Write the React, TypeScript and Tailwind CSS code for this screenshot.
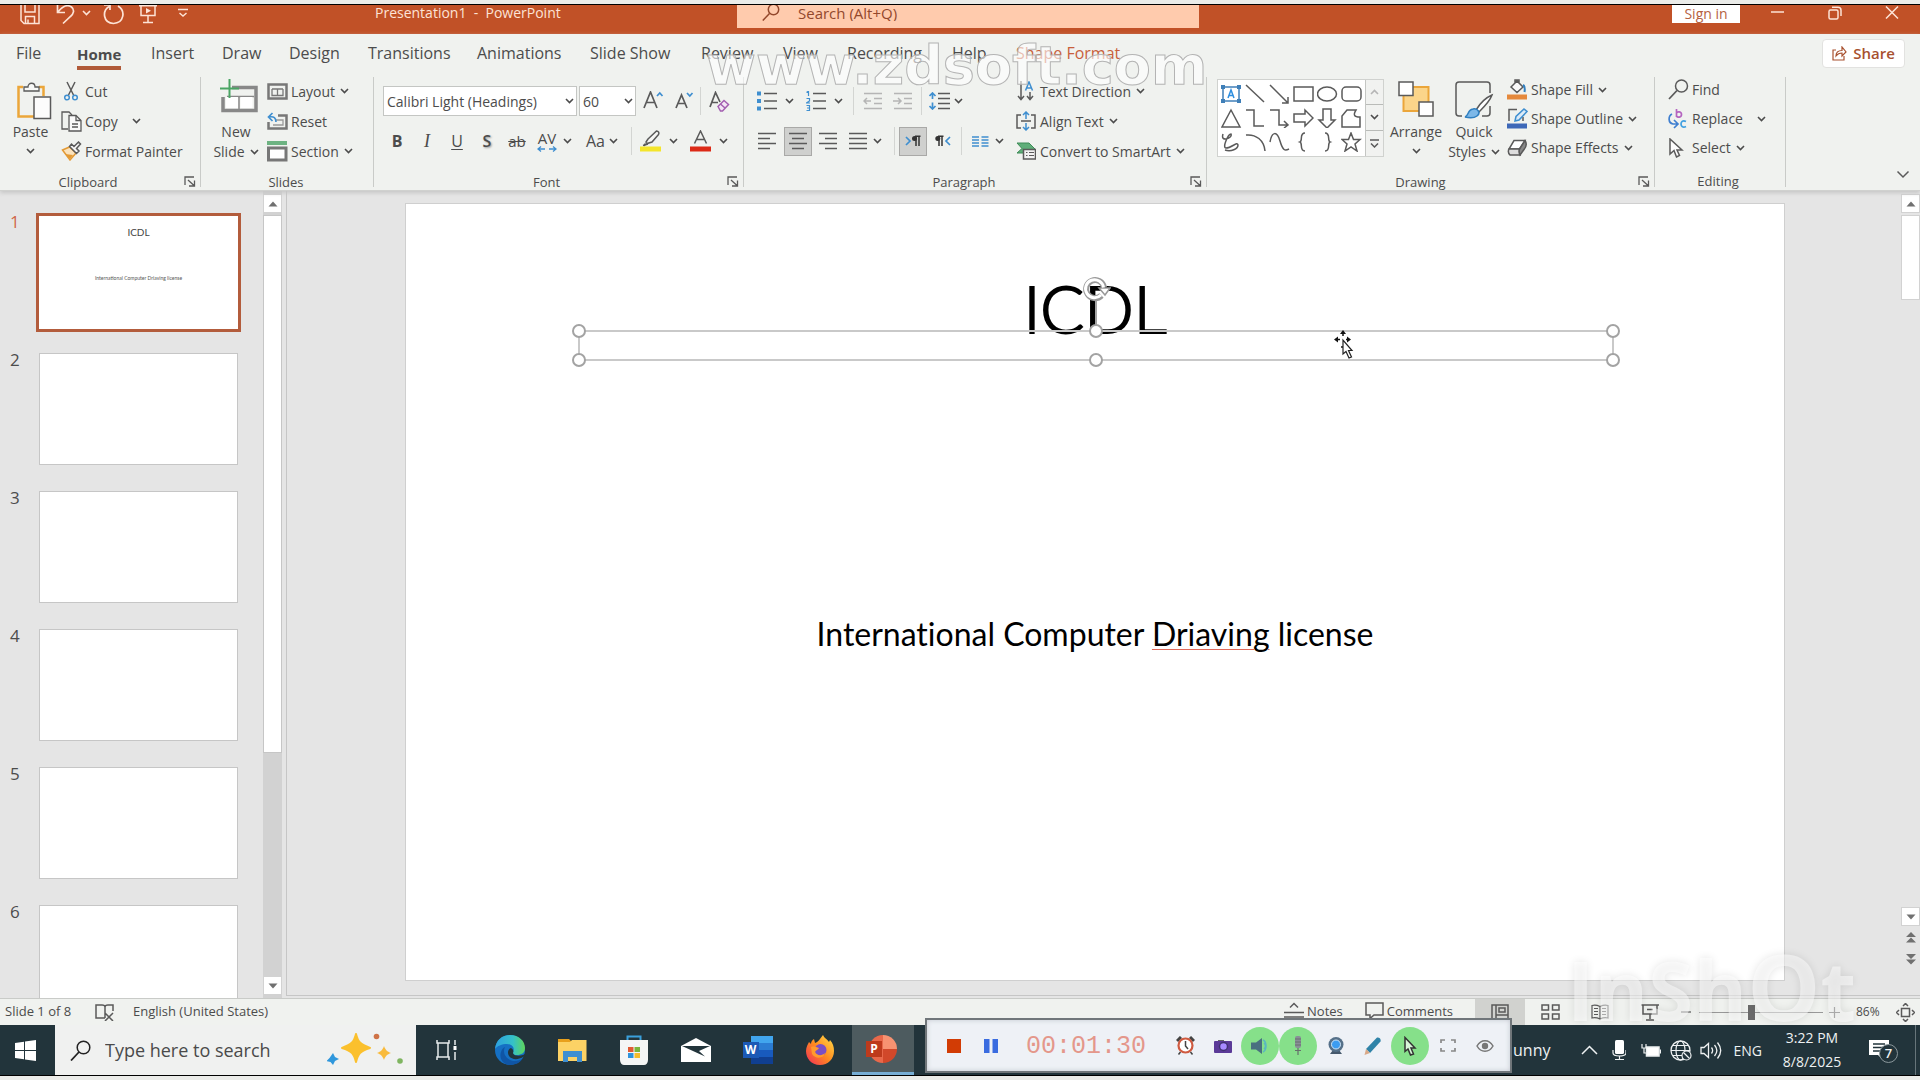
import React from "react";

type IconProps = { w: number; h: number; className?: string; children: React.ReactNode };

function Icon({ w, h, className = "", children }: IconProps) {
  return (
    <svg
      width={w}
      height={h}
      viewBox={`0 0 ${w} ${h}`}
      fill="none"
      stroke="#5a5a5a"
      strokeWidth="1.5"
      aria-hidden="true"
      className={`block shrink-0 ${className}`}
    >
      {children}
    </svg>
  );
}

function Chevron({ className = "" }: { className?: string }) {
  return (
    <Icon w={9} h={6} className={className}>
      <path d="M1 1l3.5 3.5L8 1" stroke="currentColor" strokeWidth="1.6" />
    </Icon>
  );
}

function Launcher({ label }: { label: string }) {
  return (
    <button type="button" aria-label={label} className="absolute right-1 bottom-1">
      <Icon w={12} h={11}>
        <path d="M1 9V1h9M4 4l6 5.500M10.500 4.500v5.500H5" strokeWidth="1.300" />
      </Icon>
    </button>
  );
}

function Group({
  title,
  className,
  body,
  launcher,
  children,
}: {
  title: string;
  className: string;
  body: string;
  launcher?: boolean;
  children: React.ReactNode;
}) {
  return (
    <>
      <section aria-label={title} className={`relative h-[114px] shrink-0 ${className}`}>
        <div className={`h-[90px] ${body}`}>{children}</div>
        <div className="pt-[6px] text-center text-[13px] leading-[18px]">{title}</div>
        {launcher && <Launcher label={`${title} settings`} />}
      </section>
      <div className="h-[110px] w-px shrink-0 bg-[#c9cbc8]" />
    </>
  );
}

function Cmd({
  icon,
  label,
  chev,
  wide,
}: {
  icon: React.ReactNode;
  label: string;
  chev?: boolean;
  wide?: boolean;
}) {
  return (
    <button type="button" className="flex h-[30px] items-center pb-[2px] whitespace-nowrap text-[14px]">
      <span className="flex w-6 shrink-0">{icon}</span>
      {label}
      {chev && <Chevron className={wide ? "ml-[14px]" : "ml-[5px]"} />}
    </button>
  );
}

function Divider() {
  return <span className="block h-7 w-px shrink-0 bg-[#d3d5d2]" />;
}

function Lines({ rows }: { rows: [number, number][] }) {
  return (
    <Icon w={20} h={18}>
      {rows.map(([a, b], i) => (
        <path key={i} d={`M${a} ${1.5 + i * 5}H${b}`} />
      ))}
    </Icon>
  );
}

const tabs: [string, string][] = [
  ["File", "w-[61px]"],
  ["Home", "w-[74px]"],
  ["Insert", "w-[71px]"],
  ["Draw", "w-[67px]"],
  ["Design", "w-[79px]"],
  ["Transitions", "w-[109px]"],
  ["Animations", "w-[113px]"],
  ["Slide Show", "w-[111px]"],
  ["Review", "w-[82px]"],
  ["View", "w-[64px]"],
  ["Recording", "w-[105px]"],
  ["Help", "w-[64px]"],
  ["Shape Format", "w-[120px]"],
];

function TitleBar() {
  return (
    <header className="flex h-[29px] shrink-0 items-start overflow-hidden bg-[#c15127] text-[#fde3d6]">
      <div className="flex w-[737px] shrink-0 items-start pl-5">
        <button type="button" aria-label="Save">
          <Icon w={20} h={20}>
            <path d="M1 0v15.500l3 3h15V0M5 0v7h10V0M5.500 18.500v-7h9v7M8 18.500v-4" stroke="#fde3d6" />
          </Icon>
        </button>
        <button type="button" aria-label="Undo" className="ml-4">
          <Icon w={19} h={20}>
            <path d="M1.500 0v7.500H9M2 7C6 2 11-1 15.500 2c3.500 3 2 7-1 9.500L7 18.500" stroke="#fde3d6" strokeWidth="1.700" />
          </Icon>
        </button>
        <Chevron className="mt-[5px] ml-[7px]" />
        <button type="button" aria-label="Redo" className="ml-3">
          <Icon w={21} h={20}>
            <path d="M1 0h6v5M6 1.500C-1 6 0 18 10.500 18.500 21 18 23 6 15 1" stroke="#fde3d6" strokeWidth="1.700" />
          </Icon>
        </button>
        <button type="button" aria-label="Start from beginning" className="ml-[15px]">
          <Icon w={18} h={20}>
            <path d="M0 .800h18M2 1v9.500h14V1M9 10.500V17M4 17.500h10" stroke="#fde3d6" />
            <path d="M7 3v5.500l5-2.800z" fill="#fde3d6" stroke="none" />
          </Icon>
        </button>
        <button type="button" aria-label="Customize toolbar" className="mt-[3px] ml-[21px]">
          <Icon w={10} h={10}>
            <path d="M0 1.500h10M1.500 5L5 8l3.500-3" stroke="#fde3d6" />
          </Icon>
        </button>
        <h1 className="ml-[187px] text-[14px] leading-4 whitespace-pre">Presentation1  -  PowerPoint</h1>
      </div>
      <label className="flex h-[23px] w-[462px] shrink-0 items-start bg-[#ffcbad] pl-[25px] text-[#93482c]">
        <Icon w={18} h={16}>
          <path d="M7.500 8.500L.800 15.500" stroke="#93482c" />
          <circle cx="11.500" cy="4.500" r="5.200" stroke="#93482c" />
        </Icon>
        <input
          aria-label="Search"
          placeholder="Search (Alt+Q)"
          className="ml-[18px] h-4 flex-1 bg-transparent text-[15px] leading-4 outline-none placeholder:text-[#93482c]"
        />
      </label>
      <div className="ml-auto flex items-start pr-[21px]">
        <button type="button" className="h-[18px] w-[68px] bg-white text-[14px] leading-[16px] text-[#b5613f]">
          Sign in
        </button>
        <button type="button" aria-label="Minimize" className="mt-[6px] ml-[31px]">
          <Icon w={13} h={2}>
            <path d="M0 1h13" stroke="#fde3d6" />
          </Icon>
        </button>
        <button type="button" aria-label="Restore" className="mt-px ml-[44px]">
          <Icon w={14} h={14}>
            <rect x="1" y="4" width="9" height="9" rx="1.500" stroke="#fde3d6" />
            <path d="M4 1.200h6c2 0 3 1 3 3V10" stroke="#fde3d6" />
          </Icon>
        </button>
        <button type="button" aria-label="Close" className="mt-px ml-[43px]">
          <Icon w={14} h={13}>
            <path d="M1 .500l12 12M13 .500l-12 12" stroke="#fde3d6" />
          </Icon>
        </button>
      </div>
    </header>
  );
}

function ClipboardGroup() {
  return (
    <Group title="Clipboard" className="w-[200px] [&>div:nth-child(2)]:pr-6" body="flex" launcher>
      <button type="button" className="flex w-[61px] flex-col items-center pt-[5px] text-[14px] leading-5">
        <Icon w={36} h={38} className="ml-[6px]">
          <path d="M7 5H2.500v29.500H19M23 5h4.500v9" stroke="#eba63a" strokeWidth="2.500" />
          <path d="M8 9V5h4c0-5 7-5 7 0h4v4z" fill="#f7f8f6" strokeWidth="1.300" />
          <rect x="18" y="15" width="16.500" height="21.500" fill="#fcfcfc" />
        </Icon>
        <span className="mt-[2px]">Paste</span>
        <Chevron className="mt-[6px]" />
      </button>
      <div>
        <Cmd
          label="Cut"
          icon={
            <Icon w={20} h={20}>
              <path d="M6 1l6.500 13M14 1L7.500 14" />
              <circle cx="6" cy="16.500" r="2.300" stroke="#3f8fd0" />
              <circle cx="14" cy="16.500" r="2.300" stroke="#3f8fd0" />
            </Icon>
          }
        />
        <Cmd
          label="Copy"
          chev
          wide
          icon={
            <Icon w={21} h={21}>
              <path d="M7 18H1V1h7l3 3" strokeWidth="1.300" />
              <path d="M8 4.500h7l5 5V20H8z" fill="#fafafa" strokeWidth="1.300" />
              <path d="M15 4.500v5h5M11 13h6M11 16h6" strokeWidth="1.300" />
            </Icon>
          }
        />
        <Cmd
          label="Format Painter"
          icon={
            <Icon w={21} h={20}>
              <path d="M1.500 9l7-3 6.500 6-6 7z" fill="#fbe3bd" stroke="#e39a35" />
              <path d="M4 13l5 5 3-4z" fill="#e39a35" stroke="none" />
              <path d="M8.500 5.500l7 7 2.500-2.500-2.500-2.500L19.500 3 17.500 1 13 5.500 10.500 3z" fill="#f5f5f5" />
            </Icon>
          }
        />
      </div>
    </Group>
  );
}

function SlidesGroup() {
  return (
    <Group title="Slides" className="w-[172px] [&>div:nth-child(2)]:pr-[2px]" body="flex" launcher={false}>
      <button type="button" className="ml-[4px] flex w-[62px] flex-col items-center pt-[2px] text-[14px] leading-5">
        <Icon w={40} h={36} className="ml-[6px]">
          <path d="M13 8.500h24v23H4V18" stroke="#888" strokeWidth="3.500" />
          <path d="M8 17.500h27M20 17.500V30" stroke="#888" />
          <rect x="7" y="18" width="12" height="11" fill="#fff" stroke="none" />
          <rect x="21.500" y="18" width="12" height="11" fill="#fff" stroke="none" />
          <path d="M10.500 0v19M1 9.500h19" stroke="#4aa564" strokeWidth="2" />
        </Icon>
        <span className="mt-[7px]">New</span>
        <span className="flex items-center whitespace-nowrap">
          Slide <Chevron className="ml-[5px]" />
        </span>
      </button>
      <div>
        <Cmd
          label="Layout"
          chev
          icon={
            <Icon w={21} h={17}>
              <rect x="1.500" y="1.500" width="18" height="14" stroke="#777" strokeWidth="2.500" />
              <path d="M5 6h11M5 6v6.500h11V6M10.500 6v6.500" stroke="#777" strokeWidth="1.300" />
            </Icon>
          }
        />
        <Cmd
          label="Reset"
          icon={
            <Icon w={21} h={19}>
              <path d="M11 3.500h8.500v13h-18V10" stroke="#777" strokeWidth="2.500" />
              <path d="M8 8h8v5H6" stroke="#999" strokeWidth="1.300" />
              <path d="M5.500 1L1.500 5l4 4M2 5c5-1 7 1 7 5" stroke="#3f8fd0" strokeWidth="1.700" />
            </Icon>
          }
        />
        <Cmd
          label="Section"
          chev
          icon={
            <Icon w={21} h={21}>
              <rect x="0" y="0" width="20" height="4" fill="#6db382" stroke="none" />
              <rect x="1.500" y="7" width="17.500" height="12" fill="#fff" stroke="#777" strokeWidth="3" />
            </Icon>
          }
        />
      </div>
    </Group>
  );
}

const letterBtn = "flex h-[30px] w-[30px] items-center justify-center";

function FontGroup() {
  return (
    <Group title="Font" className="w-[369px] [&>div:nth-child(2)]:pr-6" body="" launcher>
      <div className="flex items-center pt-[9px] pl-[9px]">
        <label className="relative flex items-center">
          <select
            aria-label="Font name"
            className="h-[30px] w-[194px] appearance-none border border-[#c4c6c3] bg-white pl-[3px] text-[14px]"
          >
            <option>Calibri Light (Headings)</option>
          </select>
          <Chevron className="pointer-events-none absolute right-[3px]" />
        </label>
        <label className="relative ml-[2px] flex items-center">
          <select
            aria-label="Font size"
            className="h-[30px] w-[57px] appearance-none border border-[#c4c6c3] bg-white pl-[3px] text-[14px]"
          >
            <option>60</option>
          </select>
          <Chevron className="pointer-events-none absolute right-[3px]" />
        </label>
        <button type="button" aria-label="Increase font size" className="ml-[7px]">
          <Icon w={21} h={20}>
            <path d="M1 17L7.500 1 14 17M3.500 11.500h8" strokeWidth="1.700" />
            <path d="M14 5l2.800-3L19.500 5" stroke="#3f8fd0" strokeWidth="1.700" />
          </Icon>
        </button>
        <button type="button" aria-label="Decrease font size" className="ml-[11px]">
          <Icon w={19} h={20}>
            <path d="M1 17L6.500 4 12 17M3 12.500h7" strokeWidth="1.700" />
            <path d="M12 2l2.800 3L17.500 2" stroke="#3f8fd0" strokeWidth="1.700" />
          </Icon>
        </button>
        <span className="ml-[6px]">
          <Divider />
        </span>
        <button type="button" aria-label="Clear formatting" className="ml-2">
          <Icon w={22} h={21}>
            <path d="M1 16L6.500 1.500 11 11M3 11.500h6" strokeWidth="1.700" />
            <path d="M9 15.500l6-6 4.500 4-6 6.500h-2z" fill="#f3e6f5" stroke="#a35fb0" />
            <path d="M11.500 13l4.500 4" stroke="#a35fb0" />
          </Icon>
        </button>
      </div>
      <div className="mt-[10px] flex items-center pl-2">
        <button type="button" className={`${letterBtn} text-[16px] font-bold`}>B</button>
        <button type="button" className={`${letterBtn} font-['Liberation_Serif'] text-[18px] italic`}>I</button>
        <button type="button" className={`${letterBtn} text-[16px] underline underline-offset-2`}>U</button>
        <button type="button" className={`${letterBtn} text-[16px] font-semibold [text-shadow:1px_1px_2px_#999]`}>S</button>
        <button type="button" className={`${letterBtn} text-[15px]`}>
          <s>ab</s>
        </button>
        <button type="button" aria-label="Character spacing" className="flex h-[30px] items-center pl-[5px]">
          <span className="flex flex-col items-center text-[15px] leading-[15px]">
            AV
            <Icon w={20} h={6}>
              <path d="M4 .500L1 3l3 2.500M1 3h7M16 .500L19 3l-3 2.500M19 3h-7" stroke="#3f8fd0" strokeWidth="1.300" />
            </Icon>
          </span>
          <Chevron className="ml-[6px]" />
        </button>
        <button type="button" className="ml-[14px] flex h-[30px] items-center text-[16px]">
          Aa <Chevron className="ml-1" />
        </button>
        <span className="ml-[13px]">
          <Divider />
        </span>
        <button type="button" aria-label="Highlight color" className="ml-2 flex items-center">
          <Icon w={21} h={22}>
            <path d="M5.500 13.500L4 16M8 9l8.500-8c2 0 3 2 2 3.500L12 12l-5 1.500L6 12z" fill="#f6f6f4" />
            <path d="M3 15.500l5-1.500" />
            <rect x="0" y="16.500" width="21" height="5" fill="#f4e52b" stroke="none" />
          </Icon>
          <Chevron className="ml-2" />
        </button>
        <button type="button" aria-label="Font color" className="ml-3 flex items-center">
          <Icon w={21} h={22}>
            <path d="M4.500 13.500l6-12.500 6 12.500M7 9.500h7" />
            <rect x="0" y="16.500" width="21" height="5" fill="#dc2a17" stroke="none" />
          </Icon>
          <Chevron className="ml-2" />
        </button>
      </div>
    </Group>
  );
}

function ParagraphGroup() {
  return (
    <Group title="Paragraph" className="w-[462px] [&>div:nth-child(2)]:pr-[22px]" body="flex" launcher>
      <div className="w-[272px] shrink-0 pl-[13px]">
        <div className="mt-[9px] flex h-[30px] items-center">
          <button type="button" aria-label="Bullets" className="flex items-center">
            <Icon w={20} h={20}>
              <path d="M0 2.500h4M0 10h4M0 17.500h4" stroke="#3f8fd0" strokeWidth="4" />
              <path d="M7 2.500h13M7 10h13M7 17.500h13" />
            </Icon>
            <Chevron className="ml-2" />
          </button>
          <button type="button" aria-label="Numbering" className="ml-3 flex items-center">
            <Icon w={20} h={20}>
              <path d="M.500 1.500L2.500 0v5M.500 7.500h3V10l-3 2h3.500M.500 14.500h3v5h-3M1 17h2.500" stroke="#3f8fd0" strokeWidth="1.200" />
              <path d="M7 2.500h13M7 10h13M7 17.500h13" />
            </Icon>
            <Chevron className="ml-2" />
          </button>
          <span className="ml-[10px]"><Divider /></span>
          <button type="button" aria-label="Decrease indent" className="ml-[9px]">
            <Icon w={20} h={18}>
              <path d="M1 1.500h18M11 6.500h8M11 11.500h8M1 16.500h18M8 9H1.500M4 6L1 9l3 3" stroke="#b5b5b5" />
            </Icon>
          </button>
          <button type="button" aria-label="Increase indent" className="ml-[10px]">
            <Icon w={20} h={18}>
              <path d="M1 1.500h18M11 6.500h8M11 11.500h8M1 16.500h18M0 9h7.500M5 6l3 3-3 3" stroke="#b5b5b5" />
            </Icon>
          </button>
          <span className="ml-2"><Divider /></span>
          <button type="button" aria-label="Line spacing" className="ml-[7px] flex items-center">
            <Icon w={21} h={18}>
              <path d="M9 1.500h12M9 6.500h12M9 11.500h12M9 16.500h12" />
              <path d="M3.500 1v6M.500 4l3-3 3 3M3.500 10.500v6M.500 14l3 3 3-3" stroke="#3f8fd0" strokeWidth="1.700" />
            </Icon>
            <Chevron className="ml-1" />
          </button>
        </div>
        <div className="mt-[10px] flex h-[30px] items-center">
          <button type="button" aria-label="Align left">
            <Lines rows={[[1, 19], [1, 13], [1, 19], [1, 13]]} />
          </button>
          <button type="button" aria-label="Center" className="ml-[7px] flex h-[29px] w-7 items-center justify-center border border-[#a9a9a7] bg-[#cfd0ce]">
            <Lines rows={[[1, 19], [4, 16], [1, 19], [4, 16]]} />
          </button>
          <button type="button" aria-label="Align right" className="ml-[6px]">
            <Lines rows={[[1, 19], [7, 19], [1, 19], [7, 19]]} />
          </button>
          <button type="button" aria-label="Justify" className="ml-[10px] flex items-center">
            <Lines rows={[[1, 19], [1, 19], [1, 19], [1, 19]]} />
            <Chevron className="ml-[5px]" />
          </button>
          <span className="ml-3"><Divider /></span>
          <button type="button" aria-label="Left-to-right text direction" className="ml-[4px] flex h-[29px] w-7 items-center justify-center border border-[#a9a9a7] bg-[#cfd0ce]">
            <Icon w={16} h={12}>
              <path d="M1 2l4 4-4 4" stroke="#3f8fd0" strokeWidth="1.700" />
              <path d="M11 1v10M14 1v10M10 1.200h5.500" stroke="#333" />
              <circle cx="9.500" cy="3.500" r="2.500" fill="#333" stroke="none" />
            </Icon>
          </button>
          <button type="button" aria-label="Right-to-left text direction" className="ml-2">
            <Icon w={16} h={12}>
              <path d="M15 2l-4 4 4 4" stroke="#3f8fd0" strokeWidth="1.700" />
              <path d="M4 1v10M7 1v10M3 1.200h5.500" stroke="#333" />
              <circle cx="2.800" cy="3.500" r="2.500" fill="#333" stroke="none" />
            </Icon>
          </button>
          <span className="ml-[10px]"><Divider /></span>
          <button type="button" aria-label="Columns" className="ml-[10px] flex items-center">
            <Icon w={17} h={11}>
              <path d="M0 1h7M0 4h7M0 7h7M0 10h7M9.500 1h7M9.500 4h7M9.500 7h7M9.500 10h7" stroke="#3f8fd0" />
            </Icon>
            <Chevron className="ml-[6px]" />
          </button>
        </div>
      </div>
      <div>
        <Cmd
          label="Text Direction"
          chev
          icon={
            <Icon w={20} h={20}>
              <path d="M5 0v18M2 15l3 3.500L8 15M14 11v7M11 15l3 3.500 3-3.500" />
              <path d="M9.500 9.500L13 1l3.500 8.500M10.500 7h5" stroke="#3f8fd0" />
            </Icon>
          }
        />
        <Cmd
          label="Align Text"
          chev
          icon={
            <Icon w={20} h={20}>
              <path d="M5 4H1v13h4M15 4h4v13h-4M5 10h10" />
              <path d="M10 1v7M7 4l3-3 3 3M10 12v7M7 16l3 3 3-3" stroke="#3f8fd0" />
            </Icon>
          }
        />
        <Cmd
          label="Convert to SmartArt"
          chev
          icon={
            <Icon w={20} h={18}>
              <path d="M1 1h12l6 6v4H1l5-4.500z" fill="#5fae79" stroke="#3f8c58" strokeWidth="1" />
              <rect x="7.500" y="7.500" width="12" height="9.500" fill="#f2f2f2" />
              <path d="M10 10.500h1.500M13 10.500h5M10 13.500h1.500M13 13.500h5" strokeWidth="1" />
            </Icon>
          }
        />
      </div>
    </Group>
  );
}

const shapes: React.ReactNode[] = [
  <g key="a" stroke="#3f7fb8">
    <rect x="2" y="3" width="16" height="14" />
    <path d="M7 14l3-8 3 8M8 11.500h4" stroke="#2f8fe0" />
    <path d="M0 3h4M16 3h4M0 17h4M16 17h4" strokeWidth="4" />
  </g>,
  <path key="b" d="M1 1l18 17" />,
  <path key="c" d="M1 1l18 18M19 13v6h-6" />,
  <rect key="d" x="1" y="3" width="19" height="14" />,
  <ellipse key="e" cx="10" cy="10" rx="9.500" ry="7" />,
  <rect key="f" x="1" y="3" width="19" height="14" rx="4" />,
  <path key="g" d="M10 2l9 17H1z" />,
  <path key="h" d="M1 2h8v16h10" />,
  <path key="i" d="M1 2h9v15h9M15 13l4 4-4 3" />,
  <path key="j" d="M1 6h11V2l8 8-8 8v-4H1z" />,
  <path key="k" d="M6 1h8v11h4l-8 8-8-8h4z" />,
  <path key="l" d="M6 2h9c-3 5-2 7 4 7v10H1V8z" />,
  <path key="m" d="M2 2c-3 9 10 4 8 0-3 0-9 14-5 14 6 0 11-7 12-3 0 4-7 7-13 5" />,
  <path key="n" d="M1 3c10-1 18 5 19 16" />,
  <path key="o" d="M1 10C3-1 8-1 11 9s5 10 9 8" />,
  <path key="p" d="M12 1C6 1 10 9 7 10c3 1-1 9 5 9" />,
  <path key="q" d="M8 1c6 0 2 8 5 9-3 1 1 9-5 9" />,
  <path key="r" d="M10 1l2.500 6.500H19l-5 4.500 2 7-6-4-6 4 2-7-5-4.500h6.500z" />,
];

function DrawingGroup() {
  return (
    <Group title="Drawing" className="w-[447px] [&>div:nth-child(2)]:pr-5" body="flex" launcher>
      <div className="mt-[2px] ml-[10px] flex h-[78px] w-[167px] shrink-0 border border-[#d0d2cf] bg-white">
        <div className="grid w-[147px] grid-cols-6 content-center gap-y-1 pl-[3px]">
          {shapes.map((s, i) => (
            <Icon key={i} w={21} h={20}>
              {s}
            </Icon>
          ))}
        </div>
        <div className="grid flex-1 grid-rows-3 divide-y divide-[#b9bbb8] border-l border-[#c4c6c3] bg-[#f1f2f0]">
          <button type="button" aria-label="Previous shapes" className="flex items-center justify-center text-[#b5b5b5]">
            <Chevron className="rotate-180" />
          </button>
          <button type="button" aria-label="Next shapes" className="flex items-center justify-center">
            <Chevron />
          </button>
          <button type="button" aria-label="All shapes" className="flex items-center justify-center">
            <Icon w={9} h={9}>
              <path d="M0 1h9M1 4.500L4.500 8 8 4.500" />
            </Icon>
          </button>
        </div>
      </div>
      <button type="button" className="ml-[5px] flex w-[54px] flex-col items-center pt-1 text-[14px] leading-5">
        <Icon w={36} h={36}>
          <rect x="5.500" y="6" width="25" height="24" fill="#fbd58a" stroke="#eba63a" strokeWidth="2" />
          <rect x="1" y="1" width="14" height="13.500" fill="#fff" />
          <rect x="21" y="21" width="14" height="14" fill="#fff" />
        </Icon>
        <span className="mt-[5px]">Arrange</span>
        <Chevron className="mt-[6px]" />
      </button>
      <button type="button" className="ml-[3px] flex w-[56px] flex-col items-center pt-1 text-[14px] leading-5">
        <Icon w={40} h={38}>
          <path d="M8 35H5c-2 0-3-1-3-3V4c0-2 1-3 3-3h28c2 0 3 1 3 3v8M36 25v7c0 2-1 3-3 3h-5" />
          <path d="M38 14C31 17 25 24 22 29l3 2c5-5 11-11 13-17z" fill="#fff" />
          <path d="M11 36c4-1 2-7 8-8 5-1 8 4 4 7s-8 2-12 1z" fill="#7db8e8" stroke="#2f7fc0" />
        </Icon>
        <span className="mt-[3px]">Quick</span>
        <span className="flex items-center">
          Styles <Chevron className="ml-[5px]" />
        </span>
      </button>
      <div className="-mt-px ml-[5px] [&>button]:h-[29px]">
        <Cmd
          label="Shape Fill"
          chev
          icon={
            <Icon w={21} h={21}>
              <path d="M4 8l6-6 6 6-6 5.500zM8 5V1h4v4" fill="#fafafa" />
              <path d="M16 6c2 1 2 4 1.500 7" stroke="#2f7fc0" strokeWidth="2" />
              <rect x="0" y="15.500" width="20" height="5" fill="#e5893c" stroke="none" />
            </Icon>
          }
        />
        <Cmd
          label="Shape Outline"
          chev
          icon={
            <Icon w={21} h={21}>
              <path d="M10 1.500H2V13M16 9v4" />
              <path d="M8 13l1-4.500L17 1l3 2.500L12 12z" fill="#dcebf8" stroke="#3f8fd0" />
              <rect x="0" y="15.500" width="20" height="5" fill="#3d68b8" stroke="none" />
            </Icon>
          }
        />
        <Cmd
          label="Shape Effects"
          chev
          icon={
            <Icon w={21} h={18}>
              <path d="M7 1.500h11L12.500 10H2z" fill="#fff" />
              <path d="M18 1.500c2 3 1.500 6-1 9l-4 5.500c-1-2-1.500-4-.500-6z" fill="#888" />
              <path d="M2 10c-1 2-.500 4.500 1 6h10c-1-2-1.500-4-.500-6z" fill="#ddd" />
            </Icon>
          }
        />
      </div>
    </Group>
  );
}

function EditingGroup() {
  return (
    <Group title="Editing" className="w-[130px] [&>div:nth-child(2)]:pr-1" body="" launcher={false}>
      <div className="-mt-px pl-[13px] [&>button]:h-[29px]">
        <Cmd
          label="Find"
          icon={
            <Icon w={21} h={21}>
              <circle cx="13.500" cy="7" r="6" />
              <path d="M9 11.500L1 20" strokeWidth="1.800" />
            </Icon>
          }
        />
        <Cmd
          label="Replace"
          chev
          wide
          icon={
            <Icon w={20} h={21}>
              <path d="M8.500 1v8M8.500 5c1-2 5-1.500 5 1.500s-4 3.500-5 1.500" stroke="#b565c0" strokeWidth="1.700" />
              <path d="M18 13.500c-3-1.500-5 0-5 2.500s2 4 5 2.500" stroke="#3f9fe0" strokeWidth="1.700" />
              <path d="M4 6C0 8 0 15 5 16h4M6 12l4 4-4 4" stroke="#3f7fd0" strokeWidth="1.700" />
            </Icon>
          }
        />
        <Cmd
          label="Select"
          chev
          icon={
            <Icon w={20} h={20}>
              <path d="M2 1v15l4-3.500L8.500 19l3-1.500L9 12h5z" fill="#fdfdfd" />
            </Icon>
          }
        />
      </div>
    </Group>
  );
}

function Ribbon() {
  return (
    <div className="relative z-10 h-[157px] shrink-0 border-b border-[#d0d1cf] bg-[#f0f2ef] shadow-[0_2px_4px_#c6c6c6]">
      <nav className="flex h-10 items-start pl-4">
        {tabs.map(([t, w]) => (
          <div key={t} className={`shrink-0 ${w}`}>
            <button
              type="button"
              className={
                t === "Home"
                  ? "mt-[7px] h-[29px] border-b-4 border-[#b05a38] text-[15px] leading-6 font-bold whitespace-nowrap"
                  : t === "Shape Format"
                    ? "mt-[7px] text-[16px] leading-6 whitespace-nowrap text-[#c8603c]"
                    : "mt-[7px] text-[16px] leading-6 whitespace-nowrap"
              }
            >
              {t}
            </button>
          </div>
        ))}
        <button
          type="button"
          className="mt-[5px] mr-[15px] ml-auto flex h-[29px] w-[83px] items-center justify-center gap-[6px] rounded border border-[#e2e2e0] bg-white pb-px text-[15px] font-semibold text-[#a8512f]"
        >
          <Icon w={15} h={15}>
            <path d="M4 4H1v10h11v-4M4 10c0-4 3-5.500 6-5.500V1l4 5-4 4V7c-3 0-4.500 1-6 3z" stroke="#a8512f" strokeWidth="1.200" />
          </Icon>
          Share
        </button>
      </nav>
      <div className="flex pt-[3px]">
        <ClipboardGroup />
        <SlidesGroup />
        <FontGroup />
        <ParagraphGroup />
        <DrawingGroup />
        <EditingGroup />
        <button type="button" aria-label="Collapse ribbon" className="mt-[93px] mr-[10px] ml-auto self-start">
          <Icon w={14} h={9}>
            <path d="M1.500 1.500L7 7l5.500-5.500" />
          </Icon>
        </button>
      </div>
      <div
        aria-hidden="true"
        className="pointer-events-none absolute top-[2px] left-[706px] font-['DejaVu_Sans'] text-[54px] leading-[60px] font-bold text-white/60 [-webkit-text-stroke:1px_#b4b4b4]"
      >
        www.zdsoft.com
      </div>
    </div>
  );
}

function ScrollButton({ label, up }: { label: string; up?: boolean }) {
  return (
    <button type="button" aria-label={label} className="flex h-[19px] w-full items-center justify-center border border-[#d2d2d2] bg-white">
      <Icon w={10} h={6} className={up ? "rotate-180" : ""}>
        <path d="M.500.500h9L5 5.500z" fill="#707070" stroke="none" />
      </Icon>
    </button>
  );
}

function ThumbPane() {
  return (
    <aside className="flex w-[286px] shrink-0">
      <ol className="w-[263px] overflow-hidden pt-[22px]">
        <li className="flex h-[138px] items-start">
          <span className="w-9 pl-[10px] text-[17px] leading-[18px] text-[#d0674a]">1</span>
          <div className="flex h-[119px] w-[205px] flex-col items-center border-[3px] border-[#b35c3c] bg-white font-['Lato']">
            <span className="pt-[10px] text-[10px] leading-3 text-[#444]">ICDL</span>
            <span className="pt-[37px] text-[5px] leading-[6px] text-[#555]">International Computer Driaving license</span>
          </div>
        </li>
        {[2, 3, 4, 5, 6].map((n) => (
          <li key={n} className="flex h-[138px] items-start">
            <span className="w-[39px] pl-[10px] text-[17px] leading-[18px]">{n}</span>
            <div className="mt-[2px] h-[112px] w-[199px] border border-[#c6c6c6] bg-white" />
          </li>
        ))}
      </ol>
      <div className="flex w-[19px] flex-col bg-[#d2d2d2] pt-[3px] pb-[3px]">
        <ScrollButton label="Scroll slides up" up />
        <div className="mt-[2px] h-[538px] border border-[#c6c6c6] bg-white" />
        <div className="mt-auto">
          <ScrollButton label="Scroll slides down" />
        </div>
      </div>
    </aside>
  );
}

const handle = "absolute size-[14px] rounded-full border-2 border-[#a3a3a3] bg-white";

function Slide() {
  return (
    <div className="relative mt-[12px] ml-[118px] h-[778px] flex-1 border border-[#cfcfcf] bg-white font-['Lato'] text-black">
      <h2 className="absolute inset-x-0 top-[64px] text-center text-[65px] leading-[80px] font-light [-webkit-text-stroke:2px_#000]">
        ICDL
      </h2>
      <p className="absolute inset-x-0 top-[408px] text-center text-[32px] leading-[44px] [font-variant-ligatures:none]">
        International Computer{" "}
        <span className="underline decoration-[#e06a5a] decoration-1 underline-offset-3">Driaving</span> license
      </p>
      <div className="absolute top-[126px] right-[170px] left-[172px] h-[31px] border-2 border-[#c9c9c9]">
        <span className={`${handle} -top-[8px] -left-[8px]`} />
        <span className={`${handle} -top-[8px] -right-[8px]`} />
        <span className={`${handle} -bottom-[8px] -left-[8px]`} />
        <span className={`${handle} -right-[8px] -bottom-[8px]`} />
        <span className="absolute -top-[34px] left-1/2 h-[30px] w-[2px] -translate-x-1/2 bg-[#a3a3a3]" />
        <span className={`${handle} -top-[8px] left-1/2 -translate-x-1/2`} />
        <span className={`${handle} -bottom-[8px] left-1/2 -translate-x-1/2`} />
        <Icon w={30} h={28} className="absolute -top-[57px] left-1/2 -translate-x-1/2">
          <path d="M20.500 20.500a9 9 0 1 1 2.500-8" stroke="#999" strokeWidth="6" />
          <path d="M18 13h11l-5 7z" fill="#fff" stroke="#999" />
          <path d="M20 20a9 9 0 1 1 2.500-7.500" stroke="#fff" strokeWidth="3" />
        </Icon>
      </div>
      <Icon w={22} h={32} className="absolute top-[126px] left-[928px]">
        <path d="M9 3v3M3 9.500h3M12 9.500h3M8 16v2" stroke="#111" strokeWidth="1.500" />
        <path d="M9 0l3 4H6zM0 9.500l4-3v6zM17 9.500l-4-3v6z" fill="#111" stroke="none" />
        <path d="M9 10v14l3-2.500 3 6.500 2.500-1-3-6.500H18z" fill="#fff" stroke="#222" strokeWidth="1.200" />
      </Icon>
    </div>
  );
}

function Workspace() {
  return (
    <main className="flex min-h-0 flex-1 bg-[#e5e5e5]">
      <ThumbPane />
      <div className="mb-[2px] flex min-w-0 flex-1 border-b border-l border-[#c6c6c6]">
        <Slide />
        <div className="ml-[116px] flex w-[19px] flex-col items-center pt-[3px]">
          <ScrollButton label="Scroll up" up />
          <div className="mt-[2px] h-[85px] w-full border border-[#d2d2d2] bg-white" />
          <div className="mt-auto w-full">
            <ScrollButton label="Scroll down" />
          </div>
          <button type="button" aria-label="Previous slide" className="mt-[6px]">
            <Icon w={10} h={11}>
              <path d="M5 0l5 5H0zM5 5.500l5 5H0z" fill="#707070" stroke="none" />
            </Icon>
          </button>
          <button type="button" aria-label="Next slide" className="mt-[11px] mb-[30px]">
            <Icon w={10} h={11}>
              <path d="M5 5L0 0h10zM5 10.500l-5-5h10z" fill="#707070" stroke="none" />
            </Icon>
          </button>
        </div>
      </div>
    </main>
  );
}

function StatusBar() {
  return (
    <footer className="flex h-[27px] shrink-0 items-center border-t border-[#c9cbc8] bg-[#f0f2ef] pr-[5px] pl-[5px] text-[13px]">
      <span className="w-[90px]">Slide 1 of 8</span>
      <button type="button" aria-label="Proofing errors">
        <Icon w={20} h={18}>
          <path d="M10 15H1V2h6c2 0 3 1 3 2v11M10 4c0-1 1-2 3-2h5v6M10 10l8 8M18 10l-8 8" />
        </Icon>
      </button>
      <button type="button" className="ml-[18px]">English (United States)</button>
      <div className="ml-auto flex h-full items-center">
        <button type="button" className="flex items-center gap-[3px]">
          <Icon w={20} h={16} className="-mt-1">
            <path d="M0 10.500h20M0 15h20M6 5.500l4-4 4 4" />
          </Icon>
          Notes
        </button>
        <button type="button" className="ml-[22px] flex items-center gap-[3px]">
          <Icon w={19} h={17} className="-mt-1">
            <path d="M1 1h17v12H9l-4 3.500V13H1z" />
          </Icon>
          Comments
        </button>
        <button type="button" aria-label="Normal view" className="ml-[22px] flex h-full w-[50px] items-center justify-center bg-[#d1d2cf]">
          <Icon w={18} h={16}>
            <path d="M1 1h16v14H1zM5 1v14M5 11h12" />
            <rect x="8" y="4" width="6" height="4" />
          </Icon>
        </button>
        <button type="button" aria-label="Slide sorter" className="ml-[16px]">
          <Icon w={19} h={16}>
            <path d="M1 1h6.500v5H1zM11.500 1H18v5h-6.500zM1 10h6.500v5H1zM11.500 10H18v5h-6.500z" />
          </Icon>
        </button>
        <button type="button" aria-label="Reading view" className="ml-[31px]">
          <Icon w={18} h={16}>
            <path d="M1 1.500c3-1 6 0 8 1 2-1 5-2 8-1V14c-3-1-6 0-8 1-2-1-5-2-8-1zM9 2.500V15M3 4.500h4M3 7.500h4M3 10.500h4M11 4.500h4M11 7.500h4M11 10.500h4" strokeWidth="1.200" />
          </Icon>
        </button>
        <button type="button" aria-label="Slide show" className="ml-[32px]">
          <Icon w={18} h={17}>
            <path d="M0 1h18M2 1v9h14V1M9 10v5M5 16h8M6 5.500h6" />
          </Icon>
        </button>
        <button type="button" aria-label="Zoom out" className="ml-[22px]">
          <Icon w={10} h={2}>
            <path d="M0 1h10" strokeWidth="1.200" />
          </Icon>
        </button>
        <input
          type="range"
          aria-label="Zoom"
          defaultValue={42}
          className="ml-2 h-[15px] w-[124px] appearance-none bg-[linear-gradient(#999,#999)] bg-[length:100%_1px] bg-center bg-no-repeat [&::-webkit-slider-thumb]:h-[15px] [&::-webkit-slider-thumb]:w-[7px] [&::-webkit-slider-thumb]:appearance-none [&::-webkit-slider-thumb]:bg-[#6a6a6a]"
        />
        <button type="button" aria-label="Zoom in" className="ml-[6px]">
          <Icon w={11} h={11}>
            <path d="M0 5.500h11M5.500 0v11" strokeWidth="1.200" />
          </Icon>
        </button>
        <span className="ml-4 w-[40px] text-[12px]">86%</span>
        <button type="button" aria-label="Fit slide to window">
          <Icon w={19} h={19}>
            <rect x="5.500" y="5.500" width="8" height="8" />
            <path d="M7 3l2.500-2.500L12 3M7 16l2.500 2.500L12 16M3 7L.500 9.500 3 12M16 7l2.500 2.500L16 12" />
          </Icon>
        </button>
      </div>
    </footer>
  );
}

function TaskButton({ label, active, children }: { label: string; active?: boolean; children: React.ReactNode }) {
  return (
    <button
      type="button"
      aria-label={label}
      className={
        active
          ? "ml-px flex h-full w-[62px] items-center justify-center border-b-[3px] border-[#76add4] bg-[#4d5b5f]"
          : "flex h-full w-[62px] items-center justify-center"
      }
    >
      {children}
    </button>
  );
}

function Taskbar() {
  return (
    <div className="flex h-[50px] shrink-0 items-stretch bg-[#22343b] text-[#eef1f2]">
      <button type="button" aria-label="Start" className="flex w-[55px] items-center justify-center">
        <Icon w={21} h={21} className="-ml-1">
          <path d="M0 3l9-1.200v8.200H0zM10 1.600L21 0v10H10zM0 11h9v8.200L0 18zM10 11h11v10l-11-1.600z" fill="#fff" stroke="none" />
        </Icon>
      </button>
      <label className="flex w-[361px] items-center bg-[#f0f1f0] pl-[15px]">
        <Icon w={21} h={21}>
          <circle cx="13.500" cy="7.500" r="6.300" stroke="#222" />
          <path d="M9 12L1 20.500" stroke="#222" strokeWidth="1.800" />
        </Icon>
        <input
          aria-label="Taskbar search"
          placeholder="Type here to search"
          className="ml-[14px] w-[210px] bg-transparent text-[18px] outline-none placeholder:text-[#4a4a4a]"
        />
        <Icon w={80} h={34} className="ml-[12px]">
          <path d="M29 1c2 8 4 10 14 14-10 3-12 6-14 14-2-8-4-11-14-14 10-4 12-6 14-14z" fill="#fbc02d" stroke="#fbc02d" strokeWidth="2" strokeLinejoin="round" />
          <path d="M57 13c1.500 4 3 5.500 7 7-4 1.500-5.500 3-7 7-1.500-4-3-5.500-7-7 4-1.500 5.500-3 7-7z" fill="#f9bb3c" stroke="none" />
          <path d="M6 20l2 4 4 2-4 2-2 4-2.500-3-4-1 3-3z" fill="#2f97dc" stroke="none" />
          <circle cx="49.500" cy="3.500" r="2.800" fill="#cf7347" stroke="none" />
          <circle cx="73" cy="28" r="2.800" fill="#7fb560" stroke="none" />
        </Icon>
      </label>
      <div className="mr-px">
        <TaskButton label="Task view">
          <Icon w={22} h={20}>
            <path d="M1 0v3h12V0M1 20v-3h12v3M2 3.500v13M12 3.500v13M19 0v5M19 12v8" stroke="#e6eaec" />
            <rect x="17.500" y="6" width="3" height="4" fill="#fff" stroke="none" />
          </Icon>
        </TaskButton>
      </div>
      <TaskButton label="Edge">
        <Icon w={32} h={32}>
          <defs>
            <linearGradient id="edgeTop" x1="0" y1="0" x2="1" y2="0">
              <stop offset="0" stopColor="#2da0e0" />
              <stop offset=".6" stopColor="#35c1c8" />
              <stop offset="1" stopColor="#5fd65a" />
            </linearGradient>
          </defs>
          <circle cx="16" cy="16" r="15" fill="#1570c4" stroke="none" />
          <path d="M1 15C2 6 8 1 16 1c9 0 15 6 15 13 0 5-4 7-8 7-3 0-5-1-4-3 2-3 0-8-6-8-5 0-10 2-12 5z" fill="url(#edgeTop)" stroke="none" />
          <path d="M11 13c-3 6 1 13 9 14 4 0 7-1 9-3-3 5-8 7-13 7C8 31 5 23 7 18c1-3 2-4 4-5z" fill="#0f55a5" stroke="none" />
          <path d="M17 14c-3 1-4 5-2 8 3 4 9 4 14 1l2-1v-2c-3 2-11 3-12-1 1-2 0-4-2-5z" fill="#22343b" stroke="none" />
        </Icon>
      </TaskButton>
      <TaskButton label="File Explorer">
        <Icon w={29} h={24}>
          <path d="M0 1h11l3 3H0z" fill="#e8a01c" stroke="none" />
          <path d="M0 4h12l2-2h14.500v21H0z" fill="#fcd265" stroke="none" />
          <path d="M5 24V13h19v11h-5v-5h-9v5z" fill="#3f8fd0" stroke="none" />
        </Icon>
      </TaskButton>
      <TaskButton label="Microsoft Store">
        <Icon w={30} h={30}>
          <path d="M8.500 6V1.500h13V6" stroke="#3aa0dc" strokeWidth="2" />
          <path d="M1 5h28v20c0 3-2 5-4 5H5c-2 0-4-2-4-5z" fill="#f4f5f5" stroke="none" />
          <path d="M9 12h5.500v5H9z" fill="#e05a34" stroke="none" />
          <path d="M15.500 12H21v5h-5.500z" fill="#7ab53c" stroke="none" />
          <path d="M9 18h5.500v5H9z" fill="#2f93dc" stroke="none" />
          <path d="M15.500 18H21v5h-5.500z" fill="#f6bc2c" stroke="none" />
        </Icon>
      </TaskButton>
      <TaskButton label="Mail">
        <Icon w={32} h={26}>
          <path d="M1 9L16 1l15 8v16H1z" fill="#fff" stroke="none" />
          <path d="M2 9h28l-11 5 6 5.500z" fill="#22343b" stroke="none" />
        </Icon>
      </TaskButton>
      <TaskButton label="Word">
        <span className="relative flex h-7 w-[31px] items-center text-[12px] font-bold">
          <span className="ml-[8px] h-7 w-[22px] bg-[linear-gradient(to_bottom,#41a5ee_0_25%,#2b7cd3_25%_50%,#185abd_50%_75%,#103f91_75%)]" />
          <span className="absolute top-[6px] left-0 flex size-4 items-center justify-center bg-[#1c59b5] text-white">W</span>
        </span>
      </TaskButton>
      <TaskButton label="Firefox">
        <Icon w={30} h={30}>
          <defs>
            <linearGradient id="fox" x1="1" y1="0" x2="0" y2="1">
              <stop offset="0" stopColor="#ffe14a" />
              <stop offset=".5" stopColor="#ff8a1f" />
              <stop offset="1" stopColor="#f0295c" />
            </linearGradient>
          </defs>
          <path d="M15 30C6 30 1 23 1 16c0-4 2-7 3-9l2 2c0-2 1-4 3-5l1 4c3-1 5-4 8-8 1 3 4 4 6 7l1-2c3 3 4 7 4 11 0 8-6 14-14 14z" fill="url(#fox)" stroke="none" />
          <circle cx="15.500" cy="15" r="6" fill="#7a4fc4" stroke="none" />
          <path d="M6 12c3-1 5 0 8 1-1 2-3 2-4 4 2 4 7 4 10 1-1 5-9 7-13 1z" fill="#ff9a2e" stroke="none" />
        </Icon>
      </TaskButton>
      <TaskButton label="PowerPoint" active>
        <span className="relative mt-[1px] block size-7 rounded-full bg-[conic-gradient(#f79271_0_25%,#d1482a_25%_50%,#e8684a_50%)] text-[12px] font-bold">
          <span className="absolute top-[6px] -left-[3px] flex size-4 items-center justify-center bg-[#bd3a1c] text-white">P</span>
        </span>
      </TaskButton>
      <div className="ml-auto flex items-center">
        <span className="text-[16px]">unny</span>
        <button type="button" aria-label="Hidden icons" className="ml-[30px]">
          <Icon w={17} h={10}>
            <path d="M1 9l7.500-7.500L16 9" stroke="#eef1f2" />
          </Icon>
        </button>
        <Icon w={14} h={20} className="ml-[14px]">
          <rect x="3" y="0" width="9" height="14" rx="1.500" fill="#fff" stroke="none" />
          <path d="M1 10v3c0 4 13 4 13 0v-3M7.500 16v4M3 19.500h9" stroke="#eef1f2" strokeWidth="1.200" />
        </Icon>
        <Icon w={21} h={14} className="ml-[14px]">
          <path d="M2 1v4h4V1M4 5v5h3" stroke="#eef1f2" strokeWidth="1.200" />
          <rect x="6.500" y="4" width="12.500" height="9" fill="#fff" stroke="#eef1f2" />
          <path d="M20.500 6.500v4" stroke="#eef1f2" />
        </Icon>
        <Icon w={22} h={21} className="ml-[9px]">
          <circle cx="10.500" cy="10.500" r="9.500" stroke="#eef1f2" strokeWidth="1.300" />
          <ellipse cx="10.500" cy="10.500" rx="4.500" ry="9.500" stroke="#eef1f2" strokeWidth="1.200" />
          <path d="M1 10.500h19M2.500 5.500h16M2.500 15.500h10" stroke="#eef1f2" strokeWidth="1.200" />
          <circle cx="16.500" cy="15.500" r="4.500" fill="#22343b" stroke="#eef1f2" strokeWidth="1.200" />
          <path d="M13.500 12.500l6 6" stroke="#eef1f2" strokeWidth="1.200" />
        </Icon>
        <Icon w={22} h={19} className="ml-2">
          <path d="M1 6.500h3l4.500-4v14l-4.500-4H1z" stroke="#eef1f2" strokeWidth="1.300" />
          <path d="M11.500 6.500c1.500 2 1.500 4 0 6M14.500 4c3 3.500 3 7.500 0 11M17.500 1.500c4 5 4 11 0 16" stroke="#eef1f2" strokeWidth="1.300" />
        </Icon>
        <span className="ml-3 text-[14px]">ENG</span>
        <div className="ml-[19px] w-[62px] text-center text-[14px] leading-6 whitespace-nowrap">
          <div>3:22 PM</div>
          <div>8/8/2025</div>
        </div>
        <button type="button" aria-label="7 notifications" className="relative ml-[26px] h-[30px] w-[32px]">
          <Icon w={20} h={20}>
            <path d="M0 0h20v15h-7v4l-4-4H0z" fill="#fff" stroke="none" />
            <path d="M4 4h12M4 7.500h12M4 11h8" stroke="#22343b" strokeWidth="1.300" />
          </Icon>
          <span className="absolute top-[9px] left-[10px] flex size-[19px] items-center justify-center rounded-full border border-[#8b979b] bg-[#22343b] text-[13px] font-semibold">
            7
          </span>
        </button>
        <span className="ml-[14px] h-[50px] w-px bg-[#67757a]" />
        <span className="w-1" />
      </div>
    </div>
  );
}

const recSlot = "flex h-[38px] w-[37px] shrink-0 items-center justify-center";
const recOn = "flex size-[38px] shrink-0 items-center justify-center rounded-full bg-[#86e08a]";

function Recorder() {
  return (
    <div className="absolute bottom-[7px] left-[925px] flex h-[55px] w-[587px] items-center border-2 border-[#70767a] bg-[#eef1f6] pl-[8px] shadow-[inset_0_0_5px_#c3c8cf]">
      <button type="button" aria-label="Stop recording" className={recSlot}>
        <span className="size-[14px] bg-[#d23c05]" />
      </button>
      <button type="button" aria-label="Pause recording" className={recSlot}>
        <Icon w={14} h={14}>
          <path d="M0 0h5.500v14H0zM8.500 0H14v14H8.500z" fill="#3a6ce0" stroke="none" />
        </Icon>
      </button>
      <time className="w-[158px] shrink-0 pt-[3px] pl-[17px] font-['Liberation_Mono'] text-[25px] leading-8 text-[#e4978b]">
        00:01:30
      </time>
      <button type="button" aria-label="Schedule" className={recSlot}>
        <Icon w={19} h={19}>
          <path d="M1 5l4-4M18 5l-4-4" stroke="#444" strokeWidth="3" />
          <circle cx="9.500" cy="9.500" r="7" fill="#fff" stroke="#cf5a40" strokeWidth="2.200" />
          <path d="M9.500 5v5l2.500 3M4.500 16l-2 2.500M14.500 16l2 2.500" stroke="#444" />
        </Icon>
      </button>
      <button type="button" aria-label="Snapshot" className={recSlot}>
        <Icon w={18} h={15}>
          <path d="M4 2h6v2H4z" fill="#666" stroke="none" />
          <rect x="0" y="3" width="18" height="12" rx="1" fill="#5b3a98" stroke="none" />
          <circle cx="9.500" cy="8.500" r="4" fill="#a88aff" stroke="#403070" />
        </Icon>
      </button>
      <button type="button" aria-label="Speaker on" className={recOn}>
        <Icon w={18} h={18}>
          <path d="M0 5.500h5L11 1v16l-6-4.500H0z" fill="#4a7080" stroke="none" />
          <path d="M12 3c4 2 4 10 0 12M13 6c2 2 2 4 0 6" stroke="#5ab8c0" />
        </Icon>
      </button>
      <button type="button" aria-label="Microphone on" className={recOn}>
        <Icon w={10} h={19}>
          <rect x="2" y="0" width="6" height="12" rx="2" fill="#8a8f98" stroke="none" />
          <path d="M5 12v7M2 14.500h6M2 3h6M2 6h6M2 9h6" stroke="#66706c" strokeWidth="1.200" />
        </Icon>
      </button>
      <button type="button" aria-label="Webcam" className={recSlot}>
        <Icon w={18} h={18}>
          <path d="M3 17l3-4h6l3 4z" fill="#45586c" stroke="none" />
          <circle cx="9" cy="7.500" r="7.500" fill="#557089" stroke="none" />
          <circle cx="9" cy="7.500" r="4.500" fill="#3c9cf0" stroke="#cfe5f8" strokeWidth="1" />
        </Icon>
      </button>
      <button type="button" aria-label="Draw" className={recSlot}>
        <Icon w={18} h={18}>
          <path d="M2 12L12.500 1c2-1.500 5 1 4 3.500L6 16z" fill="#2f83a8" stroke="none" />
          <path d="M2 12l4 4-5.500 2z" fill="#d9a988" stroke="none" />
        </Icon>
      </button>
      <button type="button" aria-label="Cursor on" className={recOn}>
        <Icon w={14} h={20}>
          <path d="M2 1.500v14l3-2.500 2.500 6 3-1-2.500-6h4z" fill="#d8f5d8" stroke="#333" />
        </Icon>
      </button>
      <button type="button" aria-label="Full screen" className={recSlot}>
        <Icon w={16} h={13}>
          <path d="M1 4V1h4M11 1h4v3M15 9v3h-4M5 12H1V9" stroke="#888" strokeWidth="1.700" />
        </Icon>
      </button>
      <button type="button" aria-label="Preview" className={recSlot}>
        <Icon w={18} h={12}>
          <path d="M1 6c4-7 12-7 16 0-4 7-12 7-16 0z" stroke="#777" />
          <circle cx="9" cy="6" r="3.200" fill="#777" stroke="none" />
        </Icon>
      </button>
    </div>
  );
}

export default function App() {
  return (
    <div className="relative flex h-screen flex-col overflow-hidden bg-[#ebece9] font-['Open_Sans',sans-serif] text-[#4c4c4c]">
      <div className="h-[5px] shrink-0 border-b border-black" />
      <TitleBar />
      <Ribbon />
      <Workspace />
      <StatusBar />
      <Taskbar />
      <div className="h-[5px] shrink-0 border-t border-black" />
      <div
        aria-hidden="true"
        className="pointer-events-none absolute right-[64px] bottom-[36px] text-[82px] leading-[110px] font-bold text-white/50 [text-shadow:0_0_8px_#0000001a]"
      >
        InSh<span className="text-[92px] leading-[82px]">O</span>t
      </div>
      <Recorder />
    </div>
  );
}
